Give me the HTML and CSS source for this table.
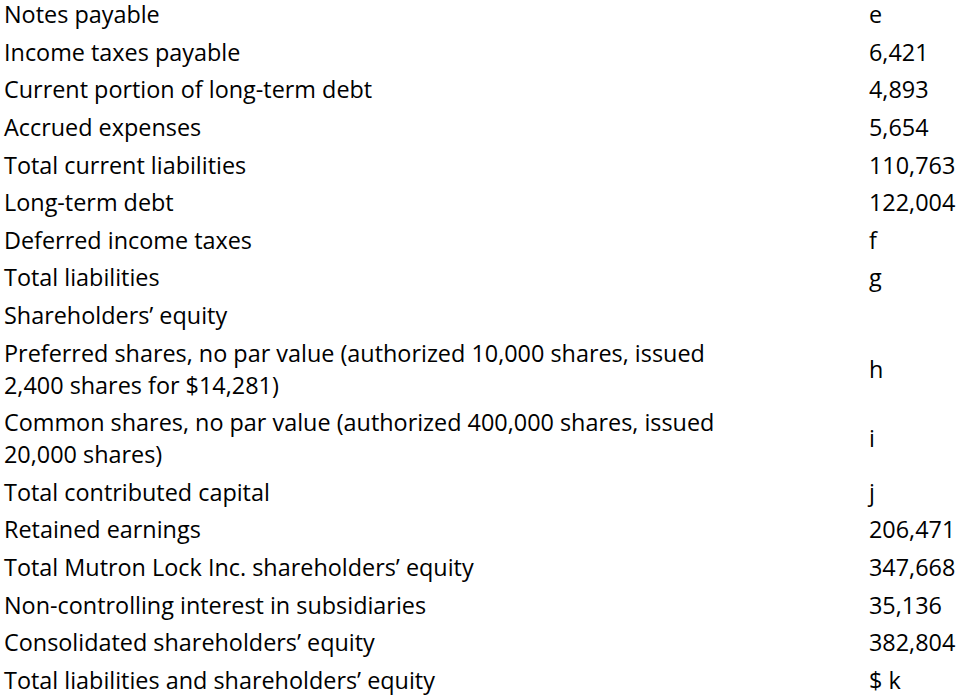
FILE: index.html
```html
<!DOCTYPE html>
<html>
<head>
<meta charset="utf-8">
<link rel="stylesheet" href="styles.css">
</head>
<body>
<div class="sheet">
  <div class="row"><div class="label">Notes payable</div><div class="value">e</div></div>
  <div class="row"><div class="label">Income taxes payable</div><div class="value">6,421</div></div>
  <div class="row"><div class="label">Current portion of long-term debt</div><div class="value">4,893</div></div>
  <div class="row"><div class="label">Accrued expenses</div><div class="value">5,654</div></div>
  <div class="row"><div class="label">Total current liabilities</div><div class="value">110,763</div></div>
  <div class="row"><div class="label">Long-term debt</div><div class="value">122,004</div></div>
  <div class="row"><div class="label">Deferred income taxes</div><div class="value">f</div></div>
  <div class="row"><div class="label">Total liabilities</div><div class="value">g</div></div>
  <div class="row"><div class="label">Shareholders’ equity</div><div class="value"></div></div>
  <div class="row"><div class="label">Preferred shares, no par value (authorized 10,000 shares, issued 2,400 shares for $14,281)</div><div class="value">h</div></div>
  <div class="row"><div class="label">Common shares, no par value (authorized 400,000 shares, issued 20,000 shares)</div><div class="value">i</div></div>
  <div class="row"><div class="label">Total contributed capital</div><div class="value">j</div></div>
  <div class="row"><div class="label">Retained earnings</div><div class="value">206,471</div></div>
  <div class="row"><div class="label">Total Mutron Lock Inc. shareholders’ equity</div><div class="value">347,668</div></div>
  <div class="row"><div class="label">Non-controlling interest in subsidiaries</div><div class="value">35,136</div></div>
  <div class="row"><div class="label">Consolidated shareholders’ equity</div><div class="value">382,804</div></div>
  <div class="row"><div class="label">Total liabilities and shareholders’ equity</div><div class="value">$ k</div></div>
</div>
</body>
</html>
```

FILE: styles.css
```css
html, body {
  margin: 0;
  padding: 0;
  background: #ffffff;
}
body {
  font-family: "Open Sans", "Noto Sans", sans-serif;
  font-size: 23.4px;
  line-height: 32px;
  color: #000000;
}
.sheet {
  margin-top: -4.6px;
  padding-left: 4px;
}
.row {
  display: grid;
  grid-template-columns: 740px 1fr;
  padding: 2.8px 0;
  align-items: center;
}
.label {
  padding-right: 6px;
}
.value {
  padding-left: 125px;
}
```
